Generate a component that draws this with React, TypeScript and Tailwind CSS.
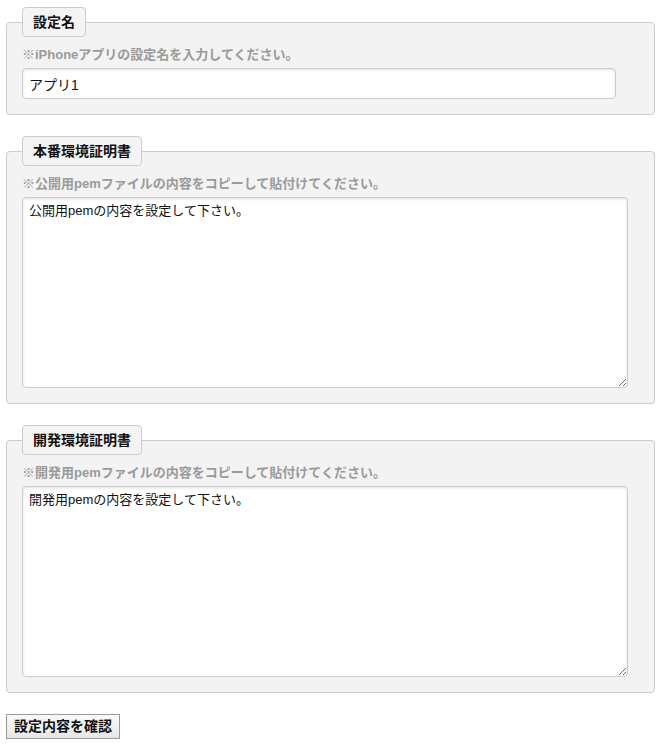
import React from "react";

const font = "font-['Liberation_Sans','Noto_Sans_CJK_JP',sans-serif]";

function Section({ title, hint, children }: { title: string; hint: string; children: React.ReactNode }) {
  return (
    <fieldset className="min-w-0 border border-[#cccccc] rounded-[4px] bg-[#f3f3f3] px-[15px] pt-[9px] pb-[15px]">
      <legend className="h-[30px] px-[10px] border border-[#cccccc] rounded-[4px] bg-[#f4f4f4] text-[14px] leading-[28px] font-bold text-[#111]">
        {title}
      </legend>
      <p className="text-[13px] leading-[18px] font-bold text-[#9a9a9a]">{hint}</p>
      <div className="mt-[4px]">{children}</div>
    </fieldset>
  );
}

export default function App() {
  return (
    <div className={`min-h-[745px] bg-white pl-[6px] pr-[8px] pt-[7px] text-[#111] ${font}`}>
      <form className="flex flex-col gap-[21px]" onSubmit={(e) => e.preventDefault()}>
        <Section title="設定名" hint="※iPhoneアプリの設定名を入力してください。">
          <input
            type="text"
            defaultValue="アプリ1"
            className="block h-[31px] w-[594px] rounded-[4px] border border-[#cccccc] bg-white px-[6px] text-[14px] text-[#111] shadow-[inset_0_1px_3px_rgba(0,0,0,0.12)] outline-none"
          />
        </Section>

        <Section title="本番環境証明書" hint="※公開用pemファイルの内容をコピーして貼付けてください。">
          <textarea
            defaultValue="公開用pemの内容を設定して下さい。"
            className="block h-[191px] w-[606px] rounded-[4px] border border-[#cccccc] bg-white px-[6px] py-[4px] text-[13px] leading-[18px] text-[#111] shadow-[inset_0_1px_3px_rgba(0,0,0,0.12)] outline-none"
          />
        </Section>

        <Section title="開発環境証明書" hint="※開発用pemファイルの内容をコピーして貼付けてください。">
          <textarea
            defaultValue="開発用pemの内容を設定して下さい。"
            className="block h-[191px] w-[606px] rounded-[4px] border border-[#cccccc] bg-white px-[6px] py-[4px] text-[13px] leading-[18px] text-[#111] shadow-[inset_0_1px_3px_rgba(0,0,0,0.12)] outline-none"
          />
        </Section>

        <div>
          <button
            type="submit"
            className="h-[25px] border border-[#9a9a9a] bg-gradient-to-b from-[#fafafa] to-[#e6e6e6] px-[7px] text-[14px] leading-[23px] font-bold text-[#111]"
          >
            設定内容を確認
          </button>
        </div>
      </form>
    </div>
  );
}
